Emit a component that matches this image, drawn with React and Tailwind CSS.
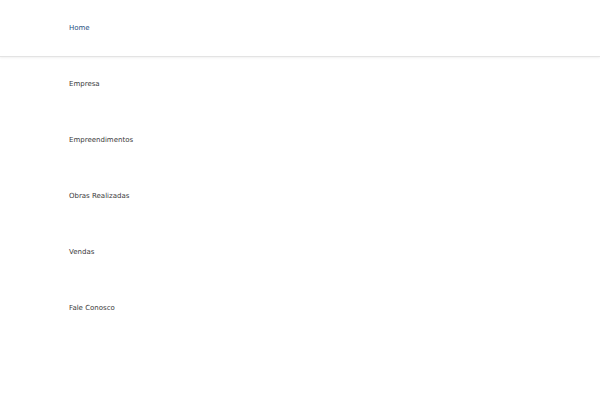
import React from 'react'

const links = ['Empresa', 'Empreendimentos', 'Obras Realizadas', 'Vendas', 'Fale Conosco']

export default function App() {
  return (
    <div className="w-[600px] h-[400px] bg-white font-['DejaVu_Sans',sans-serif] text-[7px]">
      <div className="h-[57px] flex items-center pl-[69px] border-b border-[#e3e3e3] shadow-[0_1px_2px_rgba(0,0,0,0.06)]">
        <a className="text-[#1f4f7f]">Home</a>
      </div>
      <nav className="flex flex-col -mt-px">
        {links.map(label => (
          <a key={label} className="h-[56px] flex items-center pl-[69px] text-[#3a3a3a]">
            {label}
          </a>
        ))}
      </nav>
    </div>
  )
}
